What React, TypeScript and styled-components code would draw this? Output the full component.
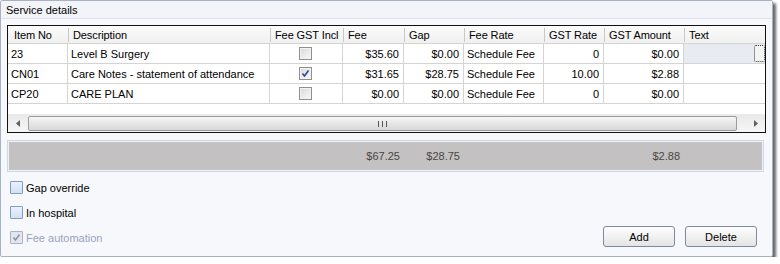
import styled, { createGlobalStyle } from 'styled-components';

const GlobalStyle = createGlobalStyle`
  html, body {
    margin: 0;
    padding: 0;
    background: #ffffff;
  }
  body {
    font-family: "Liberation Sans", Arial, sans-serif;
    font-size: 11px;
    color: #000;
  }
`;

// column widths shared by the grid rows and the totals strip
const COLS = '60px 202px 73px 61px 60px 80px 60px 80px 81px';

const Panel = styled.div`
  width: 771px;
  height: 255px;
  border: 1px solid #a7b1c6;
  border-radius: 2px;
  background: #f7f8fb;
  box-shadow: 3px 3px 3px rgba(0, 0, 0, 0.6);
  display: flex;
  flex-direction: column;
`;

const TitleBar = styled.div`
  height: 17px;
  line-height: 18px;
  padding-left: 5px;
  border-bottom: 1px solid #dde2ec;
  background: #f3f4f8;
`;

const Body = styled.div`
  padding: 6px 6px 0 6px;
  display: flex;
  flex-direction: column;
`;

const Grid = styled.div`
  width: 757px;
  border: 1px solid #111;
  background: #fff;
  display: flex;
  flex-direction: column;
`;

const HeaderRow = styled.div`
  display: grid;
  grid-template-columns: ${COLS};
  height: 17px;
  border-bottom: 1px solid #d5d5d5;
  background: linear-gradient(#fbfbfb, #f0f0f0);
`;

const HeaderCell = styled.div<{ $first?: boolean }>`
  position: relative;
  padding-left: ${({ $first }) => ($first ? 6 : 5)}px;
  line-height: 18px;
  white-space: nowrap;
  overflow: hidden;
  letter-spacing: -0.1px;
  ${({ $first }) =>
    !$first &&
    `&::before {
      content: '';
      position: absolute;
      left: 0;
      top: 2px;
      bottom: 1px;
      width: 1px;
      background: #c8c8c8;
    }`}
`;

const DataRow = styled.div`
  display: grid;
  grid-template-columns: ${COLS};
  height: 19px;
  border-bottom: 1px solid #d4d4d4;
`;

const Cell = styled.div<{ $align?: 'left' | 'right' | 'center'; $shade?: boolean }>`
  display: flex;
  align-items: center;
  justify-content: ${({ $align }) =>
    $align === 'right' ? 'flex-end' : $align === 'center' ? 'center' : 'flex-start'};
  padding: 0 4px 0 3px;
  border-right: 1px solid #d4d4d4;
  white-space: nowrap;
  overflow: hidden;
  background: ${({ $shade }) => ($shade ? '#e8ebf2' : 'transparent')};
  &:last-child {
    border-right: none;
  }
`;

const EllipsisButton = styled.div`
  margin-left: auto;
  margin-right: -4px;
  width: 9px;
  height: 15px;
  border: 1px dotted #333;
  border-radius: 2px;
  background: #f4f4f4;
`;

const GridCheck = styled.div`
  width: 11px;
  height: 11px;
  border: 1px solid #8e8f8f;
  background: linear-gradient(135deg, #d9d9d9, #fafafa);
  box-shadow: inset 0 0 0 1px #f2f2f2;
  display: flex;
  align-items: center;
  justify-content: center;
`;

const EmptySpace = styled.div`
  height: 10px;
`;

const ScrollBar = styled.div`
  height: 17px;
  display: flex;
  align-items: center;
  background: linear-gradient(#e9e9e9, #f6f6f6);
  border-top: 1px solid #ececec;
`;

const ScrollArrow = styled.div`
  width: 19px;
  height: 17px;
  display: flex;
  align-items: center;
  justify-content: center;
`;

const Thumb = styled.div`
  flex: 1;
  height: 13px;
  margin: 0 9px 0 1px;
  border: 1px solid #9b9b9b;
  border-radius: 2px;
  background: linear-gradient(#f7f7f7, #e6e6e6 50%, #d8d8d8);
  display: flex;
  align-items: center;
  justify-content: center;
`;

const Grip = styled.div`
  width: 7px;
  height: 6px;
  border-left: 1px solid #555;
  border-right: 1px solid #555;
  position: relative;
  &::after {
    content: '';
    position: absolute;
    left: 3px;
    top: 0;
    width: 1px;
    height: 6px;
    background: #555;
  }
`;

const Totals = styled.div`
  margin-top: 7px;
  width: 755px;
  height: 30px;
  border: 1px solid #cfd6e4;
  box-shadow: inset 0 0 0 1px #eef1f6;
  background: #c3c1c1;
  display: grid;
  grid-template-columns: ${COLS};
  align-items: center;
  color: #4a4742;
`;

const TotalCell = styled.div`
  text-align: right;
  padding-right: 4px;
`;

const Options = styled.div`
  display: flex;
  justify-content: space-between;
  align-items: flex-end;
  margin-top: 9px;
  padding-left: 3px;
`;

const OptionList = styled.div`
  display: flex;
  flex-direction: column;
  gap: 12px;
`;

const Option = styled.label<{ $disabled?: boolean }>`
  display: flex;
  align-items: center;
  gap: 3px;
  height: 13px;
  color: ${({ $disabled }) => ($disabled ? '#98a2c2' : '#000')};
`;

const OptionBox = styled.span<{ $disabled?: boolean }>`
  width: 11px;
  height: 11px;
  border: 1px solid ${({ $disabled }) => ($disabled ? '#aab2c6' : '#7f9dcb')};
  border-radius: 1px;
  background: ${({ $disabled }) =>
    $disabled ? '#e3e6ee' : 'linear-gradient(#eaf2fb, #d2e1f3)'};
  display: flex;
  align-items: center;
  justify-content: center;
`;

const Buttons = styled.div`
  display: flex;
  gap: 10px;
  margin-right: 9px;
  margin-bottom: -3px;
`;

const Button = styled.button`
  width: 72px;
  height: 21px;
  border: 1px solid #7b8aa6;
  border-radius: 3px;
  background: linear-gradient(#fdfdfd, #f1f1f1 50%, #e3e3e3);
  font-family: inherit;
  font-size: 11px;
  color: #000;
  padding: 0;
`;

type Row = {
  item: string;
  desc: string;
  gstIncl: boolean;
  fee: string;
  gap: string;
  rate: string;
  gstRate: string;
  gstAmount: string;
};

const rows: Row[] = [
  { item: '23', desc: 'Level B Surgery', gstIncl: false, fee: '$35.60', gap: '$0.00', rate: 'Schedule Fee', gstRate: '0', gstAmount: '$0.00' },
  { item: 'CN01', desc: 'Care Notes - statement of attendance', gstIncl: true, fee: '$31.65', gap: '$28.75', rate: 'Schedule Fee', gstRate: '10.00', gstAmount: '$2.88' },
  { item: 'CP20', desc: 'CARE PLAN', gstIncl: false, fee: '$0.00', gap: '$0.00', rate: 'Schedule Fee', gstRate: '0', gstAmount: '$0.00' },
];

const headers = ['Item No', 'Description', 'Fee GST Incl', 'Fee', 'Gap', 'Fee Rate', 'GST Rate', 'GST Amount', 'Text'];

const Tick = ({ color }: { color: string }) => (
  <svg width="9" height="9" viewBox="0 0 9 9">
    <path d="M1.5 4.5 L3.5 7 L7.5 1.5" fill="none" stroke={color} strokeWidth="1.6" />
  </svg>
);

const Arrow = ({ dir }: { dir: 'left' | 'right' }) => (
  <svg width="4" height="7" viewBox="0 0 4 7">
    <path d={dir === 'left' ? 'M4 0 L0 3.5 L4 7 Z' : 'M0 0 L4 3.5 L0 7 Z'} fill="#606060" />
  </svg>
);

export default function App() {
  return (
    <>
      <GlobalStyle />
      <Panel>
        <TitleBar>Service details</TitleBar>
        <Body>
          <Grid>
            <HeaderRow>
              {headers.map((h, i) => (
                <HeaderCell key={h} $first={i === 0}>{h}</HeaderCell>
              ))}
            </HeaderRow>
            {rows.map((r, i) => (
              <DataRow key={r.item}>
                <Cell>{r.item}</Cell>
                <Cell>{r.desc}</Cell>
                <Cell $align="center">
                  <GridCheck>{r.gstIncl && <Tick color="#2f43a0" />}</GridCheck>
                </Cell>
                <Cell $align="right">{r.fee}</Cell>
                <Cell $align="right">{r.gap}</Cell>
                <Cell>{r.rate}</Cell>
                <Cell $align="right">{r.gstRate}</Cell>
                <Cell $align="right">{r.gstAmount}</Cell>
                <Cell $shade={i === 0}>{i === 0 && <EllipsisButton />}</Cell>
              </DataRow>
            ))}
            <EmptySpace />
            <ScrollBar>
              <ScrollArrow><Arrow dir="left" /></ScrollArrow>
              <Thumb><Grip /></Thumb>
              <ScrollArrow><Arrow dir="right" /></ScrollArrow>
            </ScrollBar>
          </Grid>

          <Totals>
            <div />
            <div />
            <div />
            <TotalCell>$67.25</TotalCell>
            <TotalCell>$28.75</TotalCell>
            <div />
            <div />
            <TotalCell>$2.88</TotalCell>
            <div />
          </Totals>

          <Options>
            <OptionList>
              <Option><OptionBox />Gap override</Option>
              <Option><OptionBox />In hospital</Option>
              <Option $disabled>
                <OptionBox $disabled><Tick color="#8c95ab" /></OptionBox>
                Fee automation
              </Option>
            </OptionList>
            <Buttons>
              <Button>Add</Button>
              <Button>Delete</Button>
            </Buttons>
          </Options>
        </Body>
      </Panel>
    </>
  );
}
